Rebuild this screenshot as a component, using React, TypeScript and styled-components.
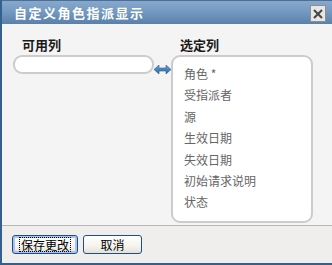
import React from 'react';
import styled, { createGlobalStyle } from 'styled-components';

const GlobalStyle = createGlobalStyle`
  html, body {
    margin: 0;
    padding: 0;
    background: #ffffff;
  }
  * {
    box-sizing: border-box;
  }
`;

const selectedColumns = ['角色 *', '受指派者', '源', '生效日期', '失效日期', '初始请求说明', '状态'];

const ArrowIcon = () => (
  <svg width="17" height="9" viewBox="0 0 17 9">
    <defs>
      <linearGradient id="arr" x1="0" y1="0" x2="0" y2="1">
        <stop offset="0" stopColor="#7aa6d6" />
        <stop offset="1" stopColor="#245f9e" />
      </linearGradient>
    </defs>
    <polygon
      points="0,4.5 5,0 5,3 12,3 12,0 17,4.5 12,9 12,6 5,6 5,9"
      fill="url(#arr)"
      stroke="#2a5c92"
      strokeWidth="0.6"
    />
  </svg>
);

const App = () => {
  return (
    <Root>
      <GlobalStyle />
      <TitleBar>
        <Title>自定义角色指派显示</Title>
        <CloseButton>
          <svg width="10" height="10" viewBox="0 0 10 10">
            <path d="M1 1 L9 9 M9 1 L1 9" stroke="#444" strokeWidth="2" />
          </svg>
        </CloseButton>
      </TitleBar>
      <Content>
        <Column>
          <Label>可用列</Label>
          <ListBox $height={19} $width={141} />
        </Column>
        <ArrowCell>
          <ArrowIcon />
        </ArrowCell>
        <Column>
          <Label>选定列</Label>
          <ListBox $height={168} $width={142}>
            {selectedColumns.map((item) => (
              <Item key={item}>{item}</Item>
            ))}
          </ListBox>
        </Column>
      </Content>
      <Footer>
        <Button $primary>
          <FocusText>保存更改</FocusText>
        </Button>
        <Button>取消</Button>
      </Footer>
    </Root>
  );
};

export default App;

interface ListBoxProps {
  $height: number;
  $width: number;
}

interface ButtonProps {
  $primary?: boolean;
}

const Root = styled.div`
  width: 332px;
  height: 265px;
  display: flex;
  flex-direction: column;
  border-left: 2px solid #35608d;
  border-bottom: 2px solid #35608d;
  background: #f4f4f4;
  font-family: 'Noto Sans CJK SC', 'Liberation Sans', sans-serif;
`;

const TitleBar = styled.div`
  height: 24px;
  flex-shrink: 0;
  display: flex;
  align-items: center;
  justify-content: space-between;
  padding: 0 6px 0 12px;
  background: linear-gradient(to bottom, #87a8cb 0%, #7398c0 50%, #5a7fa8 100%);
  border-top: 1px solid #4a6f99;
`;

const Title = styled.span`
  color: #ffffff;
  font-size: 13px;
  font-weight: bold;
  letter-spacing: 1.5px;
  line-height: 16px;
`;

const CloseButton = styled.div`
  width: 16px;
  height: 17px;
  margin-top: 2px;
  display: flex;
  align-items: center;
  justify-content: center;
  background: #e6e6e6;
  border: 1px solid #8e8e8e;
`;

const Content = styled.div`
  flex: 1;
  display: flex;
  align-items: flex-start;
  padding: 13px 0 0 11px;
  background: #f4f4f4;
  border-bottom: 1px solid #b8b8b8;
`;

const Column = styled.div`
  display: flex;
  flex-direction: column;
`;

const Label = styled.div`
  height: 18px;
  padding-left: 9px;
  font-size: 13px;
  font-weight: bold;
  line-height: 16px;
  color: #1a1a1a;
`;

const ListBox = styled.div<ListBoxProps>`
  width: ${({ $width }) => $width}px;
  height: ${({ $height }) => $height}px;
  background: #ffffff;
  border: 2px solid #cccccc;
  border-radius: 9px;
  padding: 9px 0 0 11px;
  display: flex;
  flex-direction: column;
`;

const ArrowCell = styled.div`
  width: 17px;
  padding-top: 28px;
  display: flex;
  justify-content: center;
`;

const Item = styled.div`
  height: 21.4px;
  font-size: 12px;
  line-height: 16px;
  color: #666666;
`;

const Footer = styled.div`
  height: 37px;
  flex-shrink: 0;
  display: flex;
  align-items: flex-start;
  gap: 5px;
  padding: 9px 0 0 10px;
  background: #efeeec;
`;

const Button = styled.div<ButtonProps>`
  height: 19px;
  width: ${({ $primary }) => ($primary ? '66px' : '59px')};
  display: flex;
  align-items: center;
  justify-content: center;
  font-size: 12px;
  color: #000000;
  border: 1px solid #1f4e86;
  border-radius: 3px;
  background: linear-gradient(to bottom, #ffffff 0%, #f4f3ee 60%, #e3e0d4 100%);
  box-shadow: ${({ $primary }) => ($primary ? 'inset 0 0 0 2px #a9c4ee' : 'none')};
`;

const FocusText = styled.span`
  border: 1px dotted #000000;
  padding: 0 1px;
  line-height: 13px;
`;
